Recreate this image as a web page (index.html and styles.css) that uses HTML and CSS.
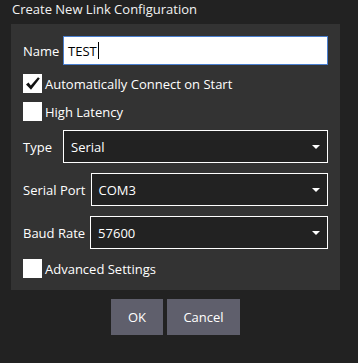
FILE: index.html
```html
<!DOCTYPE html>
<html lang="en">

<head>
  <meta charset="UTF-8" />
  <meta name="viewport" content="width=device-width, initial-scale=1.0" />
  <title>Create New Link Configuration</title>
  <link rel="stylesheet" href="styles.css">
</head>

<body>

  <div class="dialog">
    <div class="title">Create New Link Configuration</div>

    <div class="panel">
      <div class="row">
        <label class="label short">Name</label>
        <div class="text-input">TEST<span class="caret"></span></div>
      </div>

      <div class="check-row">
        <span class="checkbox">
          <svg viewBox="0 0 19 19" width="19" height="19">
            <path d="M3 10.5 L5.5 8.5 L7.8 11.5 L15 3.2 L16.8 4.6 L8 15.8 Z" fill="#111" />
          </svg>
        </span>
        <span>Automatically Connect on Start</span>
      </div>

      <div class="check-row">
        <span class="checkbox"></span>
        <span>High Latency</span>
      </div>

      <div class="row combo-row">
        <label class="label short">Type</label>
        <div class="combo">
          <span>Serial</span>
          <span class="arrow"></span>
        </div>
      </div>

      <div class="row combo-row">
        <label class="label">Serial Port</label>
        <div class="combo">
          <span>COM3</span>
          <span class="arrow"></span>
        </div>
      </div>

      <div class="row combo-row">
        <label class="label">Baud Rate</label>
        <div class="combo">
          <span>57600</span>
          <span class="arrow"></span>
        </div>
      </div>

      <div class="check-row">
        <span class="checkbox"></span>
        <span>Advanced Settings</span>
      </div>
    </div>

    <div class="buttons">
      <button class="btn btn-ok">OK</button>
      <button class="btn btn-cancel">Cancel</button>
    </div>
  </div>

</body>

</html>
```

FILE: styles.css
```css
body {
  margin: 0;
  background: #222222;
  color: #ffffff;
  font-family: "Open Sans", "Noto Sans", sans-serif;
  font-size: 13px;
}

.dialog {
  width: 329px;
  padding-left: 11px;
}

.title {
  height: 24px;
  line-height: 18px;
  padding-left: 1px;
  color: #f2f2f2;
}

.panel {
  background: #333333;
  padding: 12px;
}

.row {
  display: flex;
  align-items: center;
  height: 29px;
}

.label {
  margin-right: 5px;
  white-space: nowrap;
}

.label.short {
  width: 35px;
}

.text-input {
  flex: 1;
  box-sizing: border-box;
  height: 29px;
  background: #ffffff;
  border: 1px solid #4a7fcf;
  color: #000000;
  display: flex;
  align-items: center;
  padding-left: 4px;
}

.caret {
  display: inline-block;
  width: 1px;
  height: 17px;
  background: #000000;
  margin-left: 1px;
}

.check-row {
  display: flex;
  align-items: center;
  height: 19px;
  margin-top: 9px;
}

.checkbox {
  width: 19px;
  height: 19px;
  background: #ffffff;
  margin-right: 3px;
  display: flex;
}

.combo-row {
  height: 33px;
  margin-top: 9px;
}

.combo-row + .combo-row {
  margin-top: 10px;
}

.combo-row + .check-row {
  margin-top: 10px;
}

.combo {
  flex: 1;
  height: 33px;
  box-sizing: border-box;
  border: 1px solid #ffffff;
  background: #222222;
  display: flex;
  align-items: center;
  justify-content: space-between;
  padding: 0 7px;
}

.arrow {
  width: 0;
  height: 0;
  border-left: 4px solid transparent;
  border-right: 4px solid transparent;
  border-top: 4px solid #ffffff;
  margin-top: 1px;
}

.buttons {
  display: flex;
  justify-content: center;
  gap: 4px;
  margin-top: 9px;
}

.btn {
  background: #5f5f6c;
  color: #ffffff;
  border: none;
  height: 36px;
  font-family: inherit;
  font-size: 13px;
  padding: 0;
}

.btn-ok {
  width: 52px;
}

.btn-cancel {
  width: 73px;
}
```
